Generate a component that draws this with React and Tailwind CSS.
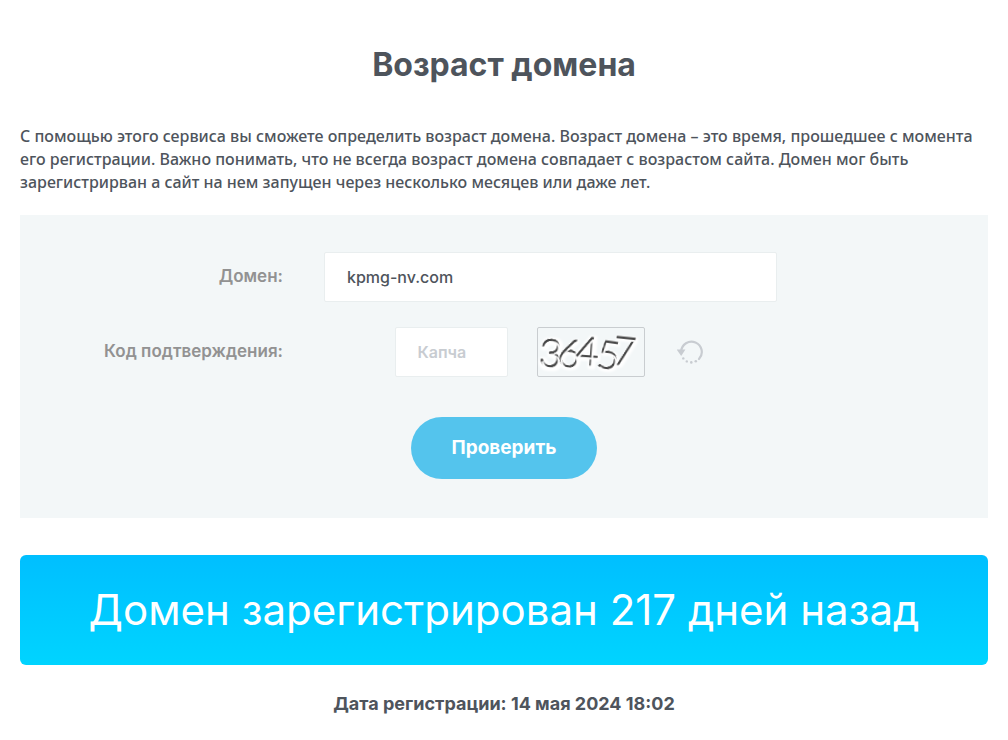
import React, { useState } from 'react';

const digits = [
  { char: '3', x: 1, y: 39, rotate: 4 },
  { char: '6', x: 20, y: 39, rotate: 10 },
  { char: '4', x: 38, y: 37, rotate: 4 },
  { char: '5', x: 59, y: 41, rotate: 8 },
  { char: '7', x: 75, y: 37, rotate: 6 },
];

const Captcha = () => (
  <svg
    viewBox="0 0 106 48"
    role="img"
    aria-label="Код на картинке"
    className="h-[50px] w-[108px] shrink-0 overflow-visible rounded-xs border border-[#c9cdd0]"
  >
    <defs>
      <filter id="emboss" x="-10%" y="-10%" width="120%" height="120%" colorInterpolationFilters="sRGB">
        <feMorphology in="SourceAlpha" operator="dilate" radius="1.5" result="fat" />
        <feGaussianBlur in="fat" stdDeviation="0.8" result="halo" />
        <feOffset in="halo" dx="1" dy="1" result="haloShift" />
        <feFlood floodColor="#fff" />
        <feComposite in2="haloShift" operator="in" result="white" />
        <feOffset in="SourceAlpha" dx="1" dy="1.6" result="shift" />
        <feComposite in="SourceGraphic" in2="shift" operator="out" result="cut" />
        <feGaussianBlur in="cut" stdDeviation="0.4" result="edge" />
        <feMerge>
          <feMergeNode in="white" />
          <feMergeNode in="white" />
          <feMergeNode in="edge" />
          <feMergeNode in="edge" />
        </feMerge>
      </filter>
    </defs>
    <g
      fontFamily='Lato, sans-serif'
      fontSize="39"
      fontWeight="300"
      fill="#444"
      stroke="#444"
      strokeWidth="0.5"
    >
      {digits.map((d) => (
        <text
          key={d.char}
          x={d.x}
          y={d.y}
          transform={`rotate(${d.rotate} ${d.x + 10} ${d.y - 12})`}
          filter="url(#emboss)"
        >
          {d.char}
        </text>
      ))}
    </g>
  </svg>
);

const RefreshIcon = () => (
  <svg viewBox="0 0 26 24" className="h-6 w-[26px]" fill="none" aria-hidden="true">
    <path d="M4.2 11.5A10.3 10.3 0 1 1 22 19" stroke="#c8ccd1" strokeWidth="2.2" strokeLinecap="round" />
    <path d="M-0.4 9.4H8.4L4.2 16Z" fill="#c8ccd1" />
    <g fill="#c8ccd1">
      <circle cx="6.3" cy="18.4" r="1.2" />
      <circle cx="9.8" cy="21.4" r="1.2" />
      <circle cx="14.3" cy="22.4" r="1.3" />
      <circle cx="18.8" cy="21.2" r="1.3" />
    </g>
  </svg>
);

const App = () => {
  const [domain, setDomain] = useState('kpmg-nv.com');
  const [code, setCode] = useState('');

  return (
    <main className="min-h-screen bg-white px-5 pt-11 pb-6 font-['Inter','Noto_Sans',sans-serif] text-[#4e545c]">
      <h1 className="text-center text-[32px] leading-[42px] font-bold">Возраст домена</h1>

      <p className="mt-[39px] font-['Noto_Sans',sans-serif] text-base leading-[23px] font-medium">
        С помощью этого сервиса вы сможете определить возраст домена. Возраст домена – это время, прошедшее с момента
        его регистрации. Важно понимать, что не всегда возраст домена совпадает с возрастом сайта. Домен мог быть
        зарегистрирван а сайт на нем запущен через несколько месяцев или даже лет.
      </p>

      <form
        className="mt-[21px] bg-[#f3f7f8] pt-[37px] pb-[39px]"
        onSubmit={(e) => e.preventDefault()}
      >
        <div className="grid grid-cols-[304fr_453fr_211fr] items-center gap-y-[25px]">
          <label htmlFor="domain" className="pr-[41px] text-right text-[17px] font-semibold text-[#929292]">
            Домен:
          </label>
          <input
            id="domain"
            type="text"
            value={domain}
            onChange={(e) => setDomain(e.target.value)}
            className="h-[50px] w-full rounded-xs border border-[#e9eeef] bg-white px-[22px] text-base font-medium outline-none"
          />

          <label htmlFor="captcha" className="col-start-1 pr-[41px] text-right text-[17px] font-semibold text-[#929292]">
            Код подтверждения:
          </label>
          <div className="flex items-center justify-center gap-[29px] pr-1">
            <input
              id="captcha"
              type="text"
              placeholder="Капча"
              value={code}
              onChange={(e) => setCode(e.target.value)}
              className="h-[50px] w-[113px] rounded-xs border border-[#e9eeef] bg-white px-[22px] text-base font-semibold outline-none placeholder:text-[#c8ccd1]"
            />
            <Captcha />
            <button type="button" aria-label="Обновить код" className="cursor-pointer pl-[3px]">
              <RefreshIcon />
            </button>
          </div>
        </div>

        <div className="mt-10 flex justify-center">
          <button
            type="submit"
            className="h-[62px] w-[186px] cursor-pointer rounded-full bg-[#54c4ed] text-[19px] font-bold text-white"
          >
            Проверить
          </button>
        </div>
      </form>

      <div className="mt-[37px] rounded-md bg-linear-to-b from-[#00bfff] to-[#00d4ff] py-[27px] text-center text-[42px] leading-[56px] text-white">
        Домен зарегистрирован 217 дней назад
      </div>

      <p className="mt-[25px] text-center text-lg leading-7 font-bold">
        Дата регистрации: 14 мая 2024 18:02
      </p>
    </main>
  );
};

export default App;
